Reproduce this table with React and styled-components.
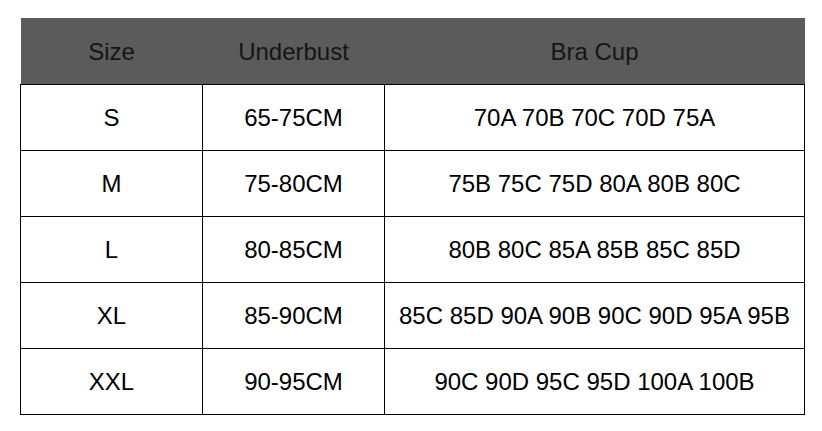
import styled, { createGlobalStyle } from 'styled-components';

const GlobalStyle = createGlobalStyle`
  html, body {
    margin: 0;
    padding: 0;
    background: #fff;
  }
`;

const rows = [
  ['S', '65-75CM', '70A 70B 70C 70D 75A'],
  ['M', '75-80CM', '75B 75C 75D 80A 80B 80C'],
  ['L', '80-85CM', '80B 80C 85A 85B 85C 85D'],
  ['XL', '85-90CM', '85C 85D 90A 90B 90C 90D 95A 95B'],
  ['XXL', '90-95CM', '90C 90D 95C 95D 100A 100B'],
];

export default function App() {
  return (
    <>
      <GlobalStyle />
      <Page>
        <Chart>
          <colgroup>
            <col style={{ width: 182 }} />
            <col style={{ width: 182 }} />
            <col />
          </colgroup>
          <thead>
            <tr>
              <HeadCell>Size</HeadCell>
              <HeadCell>Underbust</HeadCell>
              <HeadCell>Bra Cup</HeadCell>
            </tr>
          </thead>
          <tbody>
            {rows.map((r) => (
              <tr key={r[0]}>
                {r.map((c, i) => (
                  <Cell key={i}>{c}</Cell>
                ))}
              </tr>
            ))}
          </tbody>
        </Chart>
      </Page>
    </>
  );
}

const Page = styled.main`
  padding: 18px 0 0 20px;
  font-family: 'Liberation Sans', Arial, sans-serif;
`;

const Chart = styled.table`
  width: 785px;
  border-collapse: collapse;
  table-layout: fixed;
  font-size: 24px;
`;

const HeadCell = styled.th`
  height: 66px;
  padding: 3px 0 0;
  background: #5b5b5b;
  color: #151515;
  font-weight: normal;
  text-align: center;
  border-bottom: 1px solid #000;
  box-sizing: border-box;
`;

const Cell = styled.td`
  height: 66px;
  padding: 2px 0 0;
  text-align: center;
  color: #000;
  border: 1px solid #000;
  box-sizing: border-box;
`;
